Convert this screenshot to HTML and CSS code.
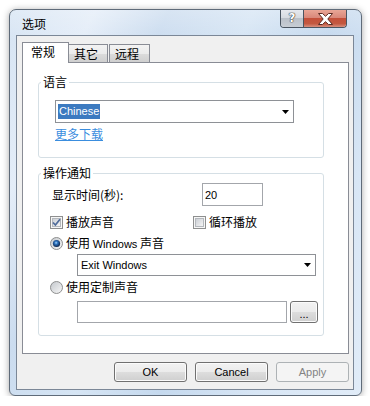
FILE: index.html
```html
<!DOCTYPE html>
<html>
  <head>
    <title>选项</title>
    <link rel="stylesheet" href="styles.css">
  </head>
  <body>
    <div class="window">
      <div class="titlebar">
        <span class="title">选项</span>
        <div class="caption-buttons">
          <div class="cap-help">?</div>
          <div class="cap-close">
            <svg width="17" height="12" viewBox="0 0 17 12">
              <path d="M1.5 0.5 H5.5 L8.5 3.3 L11.5 0.5 H15.5 L10.8 6 L15.5 11.5 H11.5 L8.5 8.7 L5.5 11.5 H1.5 L6.2 6 Z" fill="#fff" stroke="#5a2a22" stroke-width="1" stroke-linejoin="round"/>
            </svg>
          </div>
        </div>
      </div>

      <div class="client">
        <div class="tabs">
          <div class="tab active">常规</div>
          <div class="tab tab-other">其它</div>
          <div class="tab tab-remote">远程</div>
        </div>

        <div class="tab-panel">
          <fieldset class="group group-lang">
            <legend>语言</legend>
            <div class="combo combo-lang">
              <span class="combo-text selected">Chinese</span>
              <svg class="arrow" width="7" height="4" viewBox="0 0 7 4"><path d="M0 0 H7 L3.5 4 Z" fill="#000"/></svg>
            </div>
            <a class="link" href="#">更多下载</a>
          </fieldset>

          <fieldset class="group group-notify">
            <legend>操作通知</legend>
            <div class="row row-time">
              <label class="time-label">显示时间(秒):</label>
              <input class="textbox time-input" type="text" value="20">
            </div>
            <div class="row row-checks">
              <label class="check check-play">
                <svg width="13" height="13" viewBox="0 0 13 13">
                  <defs>
                    <linearGradient id="boxfill" x1="0" y1="0" x2="1" y2="1">
                      <stop offset="0" stop-color="#c9cdd3"/>
                      <stop offset="1" stop-color="#f7f7f7"/>
                    </linearGradient>
                  </defs>
                  <rect x="0.5" y="0.5" width="12" height="12" fill="#f6f6f6" stroke="#8e8f8f"/>
                  <rect x="2.5" y="2.5" width="8" height="8" fill="url(#boxfill)" stroke="#b4b8bd"/>
                  <path d="M3 6.5 L5.4 9 L10 3.2" fill="none" stroke="#4f6b9a" stroke-width="1.7"/>
                </svg>
                <span>播放声音</span>
              </label>
              <label class="check">
                <svg width="13" height="13" viewBox="0 0 13 13">
                  <rect x="0.5" y="0.5" width="12" height="12" fill="#f6f6f6" stroke="#8e8f8f"/>
                  <rect x="2.5" y="2.5" width="8" height="8" fill="url(#boxfill)" stroke="#b4b8bd"/>
                </svg>
                <span>循环播放</span>
              </label>
            </div>
            <div class="row row-radio">
              <label class="radio">
                <svg width="13" height="13" viewBox="0 0 13 13">
                  <defs>
                    <linearGradient id="ringfill" x1="0" y1="0" x2="1" y2="1">
                      <stop offset="0" stop-color="#c3c7cc"/>
                      <stop offset="1" stop-color="#f8f8f8"/>
                    </linearGradient>
                    <radialGradient id="dotfill" cx="0.45" cy="0.4" r="0.6">
                      <stop offset="0" stop-color="#a8d8fb"/>
                      <stop offset="0.35" stop-color="#2f74c0"/>
                      <stop offset="1" stop-color="#0a1f44"/>
                    </radialGradient>
                  </defs>
                  <circle cx="6.5" cy="6.5" r="6" fill="url(#ringfill)" stroke="#8e8f8f"/>
                  <circle cx="6.5" cy="6.5" r="3.6" fill="url(#dotfill)"/>
                </svg>
                <span>使用 <span class="latin">Windows</span> 声音</span>
              </label>
            </div>
            <div class="combo combo-sound">
              <span class="combo-text">Exit Windows</span>
              <svg class="arrow" width="7" height="4" viewBox="0 0 7 4"><path d="M0 0 H7 L3.5 4 Z" fill="#000"/></svg>
            </div>
            <div class="row row-radio">
              <label class="radio">
                <svg width="13" height="13" viewBox="0 0 13 13">
                  <circle cx="6.5" cy="6.5" r="6" fill="url(#ringfill)" stroke="#8e8f8f"/>
                </svg>
                <span>使用定制声音</span>
              </label>
            </div>
            <div class="row row-file">
              <input class="textbox file-input" type="text" value="">
              <button class="btn btn-browse" type="button">...</button>
            </div>
          </fieldset>
        </div>

        <div class="buttons">
          <button class="btn" type="button">OK</button>
          <button class="btn" type="button">Cancel</button>
          <button class="btn" type="button" disabled>Apply</button>
        </div>
      </div>
    </div>
  </body>
</html>
```

FILE: styles.css
```css
/* Options dialog, Windows 7 look */
body {
  margin: 0;
  background: #fff;
  font-family: "Liberation Sans", "Noto Sans CJK SC", sans-serif;
  font-size: 12px;
  line-height: 14px;
  color: #000;
}

.window {
  box-sizing: border-box;
  width: 353px;
  height: 387px;
  margin: 9px 0 0 9px;
  padding: 0 7px 5px 6px;
  border: 1px solid #5f6b79;
  border-radius: 7px 7px 6px 6px;
  background:
    linear-gradient(180deg, rgba(255, 255, 255, 0.25), rgba(255, 255, 255, 0) 30px),
    linear-gradient(115deg, #d6e4f3 0%, #e4edf8 16%, #cbdcef 30%, #d6e5f4 46%, #c5d9ee 62%, #d8e6f5 80%, #e1ecf8 100%);
  box-shadow: 0 1px 7px rgba(0, 0, 0, 0.35);
}

/* title bar */
.titlebar {
  display: flex;
  justify-content: space-between;
  align-items: flex-start;
  height: 25px;
}

.title {
  padding: 7px 0 0 6px;
  font-family: "Noto Sans CJK SC", sans-serif;
}

.caption-buttons {
  display: flex;
  height: 17px;
  margin-right: 7px;
  border: 1px solid #4a5561;
  border-top: none;
  border-radius: 0 0 4px 4px;
  overflow: hidden;
}

.cap-help {
  width: 22px;
  border-right: 1px solid #4a5561;
  background: linear-gradient(#e6e9ee 0%, #d6dbe1 45%, #bac1c9 50%, #c7cdd4 100%);
  color: #fff;
  font-family: "DejaVu Sans", sans-serif;
  font-weight: bold;
  font-size: 12px;
  line-height: 16px;
  text-align: center;
  text-shadow: 0 0 1px #333, 0 0 1px #333, 0 0 1px #333;
}

.cap-close {
  display: flex;
  align-items: center;
  justify-content: center;
  width: 42px;
  background: linear-gradient(#e9a696 0%, #d9887a 45%, #c4503a 50%, #c35840 80%, #d9907f 100%);
}

/* client area */
.client {
  box-sizing: border-box;
  height: 355px;
  padding: 6px 4px 7px 5px;
  border: 1px solid #7b8797;
  background: #f0f0f0;
  display: flex;
  flex-direction: column;
}

.tabs {
  display: flex;
  align-items: flex-end;
  height: 20px;
  font-family: "Noto Sans CJK SC", sans-serif;
}

.tab {
  box-sizing: border-box;
  height: 18px;
  padding: 2px 0 0 5px;
  border: 1px solid #898c95;
  border-bottom: none;
  background: linear-gradient(#f3f3f3 0%, #ebebeb 50%, #dcdcdc 51%, #cfcfcf 100%);
}

.tab.active {
  position: relative;
  z-index: 1;
  width: 47px;
  height: 21px;
  margin-bottom: -1px;
  padding-left: 8px;
  background: #fff;
}

.tab-other {
  width: 40px;
  margin-left: -1px;
}

.tab-remote {
  width: 41px;
  margin-left: 1px;
}

.tab-panel {
  box-sizing: border-box;
  width: 327px;
  height: 292px;
  padding: 12px 0 0 15px;
  border: 1px solid #898c95;
  background: #fff;
}

/* group boxes */
.group {
  box-sizing: border-box;
  width: 286px;
  margin: 0;
  padding: 0;
  border: 1px solid #d5dfe5;
  border-radius: 3px;
  min-inline-size: 0;
}

.group legend {
  margin-left: 2px;
  padding: 0 2px;
  font-family: "Noto Sans CJK SC", sans-serif;
  line-height: 14px;
}

.group-notify {
  margin-top: 8px;
}

.combo {
  box-sizing: border-box;
  display: flex;
  align-items: center;
  justify-content: space-between;
  width: 239px;
  padding: 0 4px 0 2px;
  border: 1px solid #8e9196;
  background: #fff;
  font-size: 11px;
}

.combo-lang {
  height: 23px;
  margin: 11px 0 0 16px;
}

.combo-sound {
  height: 22px;
  margin: 1px 0 0 38px;
  padding-left: 3px;
}

.selected {
  display: inline-block;
  padding: 0 1px;
  line-height: 15px;
  background: #3c7ac0;
  color: #fff;
}

.link {
  display: block;
  width: fit-content;
  margin: 4px 0 16px 16px;
  color: #3a8dde;
  font-family: "Noto Sans CJK SC", sans-serif;
  text-decoration: underline;
}

.row {
  display: flex;
  align-items: center;
  height: 20px;
  padding-left: 11px;
  font-family: "Noto Sans CJK SC", sans-serif;
}

.row-time {
  height: 23px;
  margin-top: 3px;
  padding-left: 13px;
}

.time-label {
  width: 150px;
}

.textbox {
  box-sizing: border-box;
  margin: 0;
  padding: 0 2px;
  border: 1px solid #a3a6ab;
  background: #fff;
  font-family: "Liberation Sans", sans-serif;
  font-size: 11px;
  color: #000;
}

.time-input {
  width: 61px;
  height: 23px;
}

.row-checks {
  margin-top: 6px;
}

.check,
.radio {
  display: flex;
  align-items: center;
  gap: 3px;
}

.check-play {
  width: 143px;
}

.row-radio {
  margin-top: 1px;
}

.latin {
  font-family: "Liberation Sans", sans-serif;
  font-size: 11px;
}

.row-file {
  height: 22px;
  margin: 4px 0 12px;
  padding-left: 38px;
}

.file-input {
  width: 210px;
  height: 22px;
}

/* push buttons */
.btn {
  box-sizing: border-box;
  width: 73px;
  height: 20px;
  margin: 0;
  padding: 0;
  border: 1px solid #707070;
  border-radius: 3px;
  background: linear-gradient(#f2f2f2 0%, #ebebeb 50%, #dddddd 51%, #cfcfcf 100%);
  box-shadow: inset 0 0 0 1px #fbfbfb;
  font-family: "Liberation Sans", sans-serif;
  font-size: 11px;
  color: #000;
}

.btn:disabled {
  border-color: #adb2b5;
  background: #f4f4f4;
  box-shadow: none;
  color: #838383;
}

.btn-browse {
  width: 28px;
  height: 22px;
  margin-left: 3px;
  padding-top: 4px;
}

.buttons {
  display: flex;
  justify-content: flex-end;
  gap: 8px;
  margin-top: 8px;
}
```
